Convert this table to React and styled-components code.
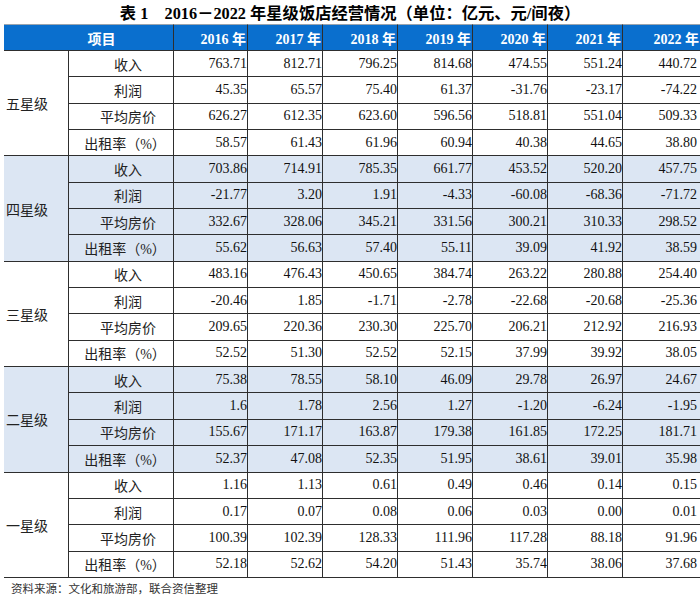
import React from "react";
import styled, { createGlobalStyle } from "styled-components";

const GlobalStyle = createGlobalStyle`
  html, body { margin: 0; padding: 0; background: #fff; }
  body { width: 700px; height: 595px; overflow: hidden; }
`;

const FONT = `"Liberation Serif", "Noto Sans CJK SC", serif`;
const LINE = "#2e2e2e";

const Page = styled.div`
  width: 700px;
  height: 595px;
  display: flex;
  flex-direction: column;
  font-family: ${FONT};
  color: #111;
`;

const Title = styled.h1`
  margin: 0;
  height: 24px;
  display: flex;
  align-items: center;
  justify-content: center;
  padding-left: 0;
  font-size: 16.3px;
  font-weight: bold;
  color: #000;
  white-space: pre;
  letter-spacing: 0;
`;

const Grid = styled.div`
  margin-left: 4px;
  display: grid;
  grid-template-columns: 64px 105px 74px 75px 75px 75px 75px 75px 78px;
  grid-template-rows: 27px repeat(20, 26.35px);
`;

const HeadCell = styled.div`
  box-sizing: border-box;
  background: #0a6fce;
  color: #fff;
  font-weight: bold;
  font-size: 14px;
  border-top: 1px solid #9aa4ae;
  border-bottom: 1px solid ${LINE};
  border-left: ${(p) => (p.$first ? "none" : `1px solid ${LINE}`)};
  grid-column: ${(p) => (p.$first ? "span 2" : "auto")};
  display: flex;
  align-items: center;
  justify-content: ${(p) => (p.$first ? "center" : "flex-end")};
  padding: ${(p) => (p.$first ? "0 0 0 26px" : "0 1px 0 0")};
  white-space: pre;
`;

const GroupCell = styled.div`
  box-sizing: border-box;
  grid-row: span 4;
  background: ${(p) => (p.$shade ? "#dce6f3" : "#fff")};
  border-bottom: 1px solid ${LINE};
  display: flex;
  align-items: center;
  padding-left: 2px;
  font-size: 14px;
  color: #222;
`;

const ItemCell = styled.div`
  box-sizing: border-box;
  background: ${(p) => (p.$shade ? "#dce6f3" : "#fff")};
  border-left: 1px solid ${LINE};
  border-bottom: 1px solid ${LINE};
  display: flex;
  align-items: center;
  justify-content: center;
  padding-left: ${(p) => p.$indent}px;
  font-size: 14px;
  color: #222;
  white-space: pre;
`;

const ValueCell = styled.div`
  box-sizing: border-box;
  background: ${(p) => (p.$shade ? "#dce6f3" : "#fff")};
  border-left: 1px solid ${LINE};
  border-bottom: 1px solid ${LINE};
  display: flex;
  align-items: center;
  justify-content: flex-end;
  padding-right: ${(p) => (p.$last ? 3 : 0)}px;
  font-size: 14px;
  color: #111;
`;

const Source = styled.div`
  padding: 3px 0 0 11px;
  font-family: "Noto Sans CJK SC", sans-serif;
  font-size: 11.5px;
  color: #333;
  line-height: 14px;
`;

const years = ["2016", "2017", "2018", "2019", "2020", "2021", "2022"];
const items = [
  { label: "收入", indent: 14 },
  { label: "利润", indent: 14 },
  { label: "平均房价", indent: 14 },
  { label: "出租率（%）", indent: 8 },
];

const groups = [
  {
    name: "五星级",
    rows: [
      ["763.71", "812.71", "796.25", "814.68", "474.55", "551.24", "440.72"],
      ["45.35", "65.57", "75.40", "61.37", "-31.76", "-23.17", "-74.22"],
      ["626.27", "612.35", "623.60", "596.56", "518.81", "551.04", "509.33"],
      ["58.57", "61.43", "61.96", "60.94", "40.38", "44.65", "38.80"],
    ],
  },
  {
    name: "四星级",
    shade: true,
    rows: [
      ["703.86", "714.91", "785.35", "661.77", "453.52", "520.20", "457.75"],
      ["-21.77", "3.20", "1.91", "-4.33", "-60.08", "-68.36", "-71.72"],
      ["332.67", "328.06", "345.21", "331.56", "300.21", "310.33", "298.52"],
      ["55.62", "56.63", "57.40", "55.11", "39.09", "41.92", "38.59"],
    ],
  },
  {
    name: "三星级",
    rows: [
      ["483.16", "476.43", "450.65", "384.74", "263.22", "280.88", "254.40"],
      ["-20.46", "1.85", "-1.71", "-2.78", "-22.68", "-20.68", "-25.36"],
      ["209.65", "220.36", "230.30", "225.70", "206.21", "212.92", "216.93"],
      ["52.52", "51.30", "52.52", "52.15", "37.99", "39.92", "38.05"],
    ],
  },
  {
    name: "二星级",
    shade: true,
    rows: [
      ["75.38", "78.55", "58.10", "46.09", "29.78", "26.97", "24.67"],
      ["1.6", "1.78", "2.56", "1.27", "-1.20", "-6.24", "-1.95"],
      ["155.67", "171.17", "163.87", "179.38", "161.85", "172.25", "181.71"],
      ["52.37", "47.08", "52.35", "51.95", "38.61", "39.01", "35.98"],
    ],
  },
  {
    name: "一星级",
    rows: [
      ["1.16", "1.13", "0.61", "0.49", "0.46", "0.14", "0.15"],
      ["0.17", "0.07", "0.08", "0.06", "0.03", "0.00", "0.01"],
      ["100.39", "102.39", "128.33", "111.96", "117.28", "88.18", "91.96"],
      ["52.18", "52.62", "54.20", "51.43", "35.74", "38.06", "37.68"],
    ],
  },
];

export default function App() {
  return (
    <>
      <GlobalStyle />
      <Page>
        <Title>{"表 1　2016－2022 年星级饭店经营情况（单位：亿元、元/间夜）"}</Title>
        <Grid>
          <HeadCell $first>项目</HeadCell>
          {years.map((y) => (
            <HeadCell key={y}>{`${y} 年`}</HeadCell>
          ))}
          {groups.map((g) => (
            <React.Fragment key={g.name}>
              <GroupCell $shade={g.shade}>{g.name}</GroupCell>
              {g.rows.map((row, ri) => (
                <React.Fragment key={ri}>
                  <ItemCell $shade={g.shade} $indent={items[ri].indent}>
                    {items[ri].label}
                  </ItemCell>
                  {row.map((v, ci) => (
                    <ValueCell key={ci} $shade={g.shade} $last={ci === 6}>
                      {v}
                    </ValueCell>
                  ))}
                </React.Fragment>
              ))}
            </React.Fragment>
          ))}
        </Grid>
        <Source>资料来源：文化和旅游部，联合资信整理</Source>
      </Page>
    </>
  );
}
